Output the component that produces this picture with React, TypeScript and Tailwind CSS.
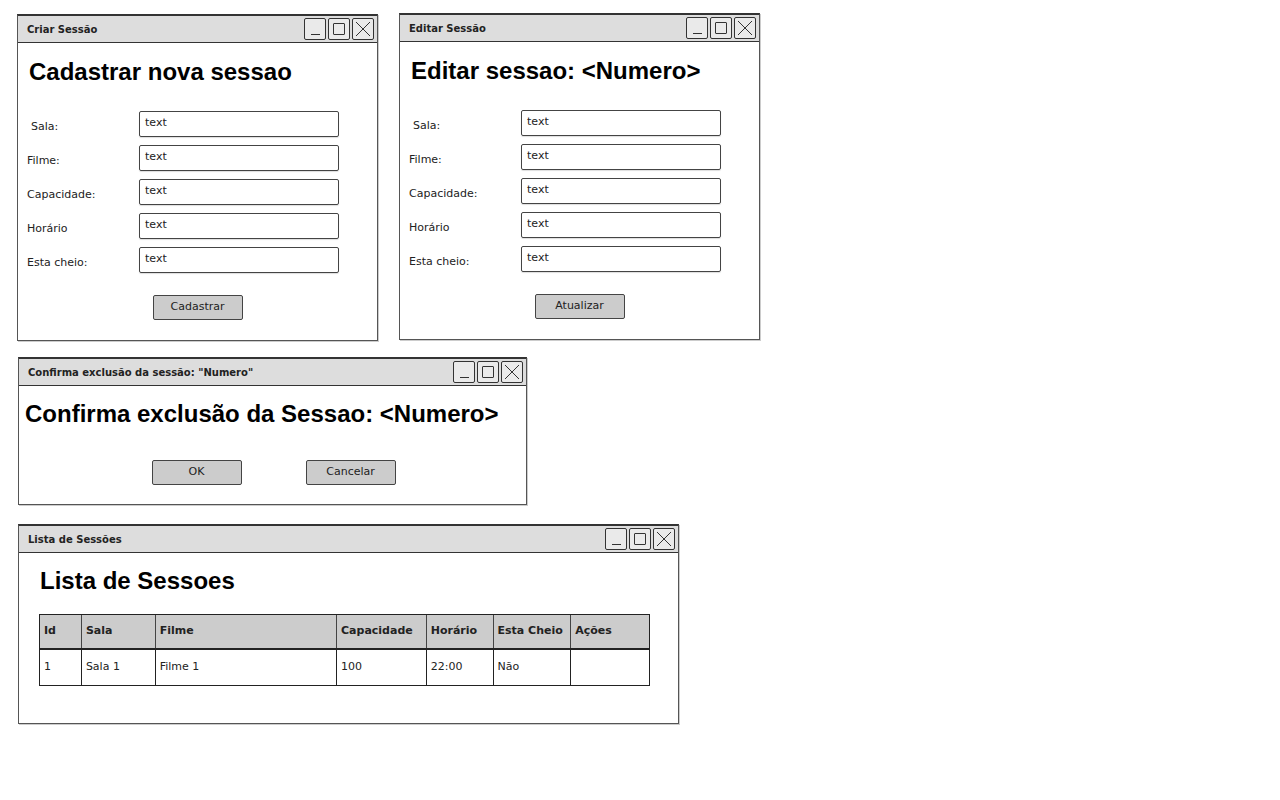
import React from 'react';

const hand = "font-['DejaVu_Sans',sans-serif]";
const head = "font-['Liberation_Sans',Arial,sans-serif]";

function TitleButtons() {
  return (
    <div className="flex gap-[2px]">
      {/* minimize */}
      <div className="w-[22px] h-[22px] border border-[#333] rounded-[2px] bg-white/40 flex items-end justify-center pb-[4px]">
        <div className="w-[9px] h-[1px] bg-[#333]" />
      </div>
      {/* maximize */}
      <div className="w-[22px] h-[22px] border border-[#333] rounded-[2px] bg-white/40 flex items-center justify-center">
        <div className="w-[12px] h-[12px] border border-[#333] rounded-[1px]" />
      </div>
      {/* close */}
      <div className="w-[22px] h-[22px] border border-[#333] rounded-[2px] bg-white/40 flex items-center justify-center">
        <svg width="16" height="16" viewBox="0 0 16 16">
          <path d="M1 1 L15 15 M15 1 L1 15" stroke="#333" strokeWidth="1" fill="none" />
        </svg>
      </div>
    </div>
  );
}

function Window({
  title,
  className,
  children,
}: {
  title: string;
  className: string;
  children: React.ReactNode;
}) {
  return (
    <div className={`bg-white border border-[#555] border-t-2 border-t-[#333] flex flex-col shadow-[1px_1px_0_#ccc] ${className}`}>
      <div className="h-[27px] bg-[#dddddd] border-b border-[#333] flex items-center justify-between pl-[9px] pr-[3px]">
        <span className={`${hand} text-[10px] font-bold text-[#222]`}>{title}</span>
        <TitleButtons />
      </div>
      {children}
    </div>
  );
}

function SketchButton({ label }: { label: string }) {
  return (
    <div className={`w-[90px] h-[25px] bg-[#cccccc] border border-[#444] rounded-[2px] flex items-center justify-center ${hand} text-[11px] text-[#222]`}>
      {label}
    </div>
  );
}

const fields = ['Sala:', 'Filme:', 'Capacidade:', 'Horário', 'Esta cheio:'];

function SessionForm({ heading, button }: { heading: string; button: string }) {
  return (
    <div className="flex flex-col flex-1">
      <h1 className={`${head} text-[24px] leading-[28px] font-bold text-black mt-[15px] ml-[11px]`}>{heading}</h1>
      <div className="flex flex-col gap-[8px] mt-[25px]">
        {fields.map((f, i) => (
          <div key={f} className="flex items-center h-[26px]">
            <span className={`${hand} text-[11px] text-[#222] w-[121px] ${i === 0 ? 'pl-[13px]' : 'pl-[9px]'} pt-[6px]`}>{f}</span>
            <div className={`w-[200px] h-[26px] border border-[#444] rounded-[2px] shadow-[0_1px_1px_#ddd] px-[5px] pt-[4px] ${hand} text-[11px] leading-[14px] text-[#222]`}>
              text
            </div>
          </div>
        ))}
      </div>
      <div className="flex justify-center mt-[22px]">
        <SketchButton label={button} />
      </div>
    </div>
  );
}

const columns = [
  { name: 'Id', w: 'w-[42px]', v: '1' },
  { name: 'Sala', w: 'w-[74px]', v: 'Sala 1' },
  { name: 'Filme', w: 'w-[182px]', v: 'Filme 1' },
  { name: 'Capacidade', w: 'w-[90px]', v: '100' },
  { name: 'Horário', w: 'w-[67px]', v: '22:00' },
  { name: 'Esta Cheio', w: 'w-[78px]', v: 'Não' },
  { name: 'Ações', w: 'w-[78px]', v: '' },
];

export default function App() {
  return (
    <div className="w-[1280px] h-[800px] bg-white pl-[17px] pt-[13px] flex flex-col items-start">
      <div className="flex items-start gap-[21px]">
        <Window title="Criar Sessão" className="w-[361px] h-[327px] mt-[1px]">
          <SessionForm heading="Cadastrar nova sessao" button="Cadastrar" />
        </Window>
        <Window title="Editar Sessão" className="w-[361px] h-[327px]">
          <SessionForm heading="Editar sessao: <Numero>" button="Atualizar" />
        </Window>
      </div>

      <Window title={'Confirma exclusão da sessão: "Numero"'} className="w-[509px] h-[148px] mt-[16px] ml-[1px]">
        <h1 className={`${head} text-[24px] leading-[28px] font-bold text-black mt-[14px] ml-[6px]`}>
          Confirma exclusão da Sessao: &lt;Numero&gt;
        </h1>
        <div className="flex justify-center gap-[64px] mt-[32px] pl-[2px]">
          <SketchButton label="OK" />
          <SketchButton label="Cancelar" />
        </div>
      </Window>

      <Window title="Lista de Sessões" className="w-[661px] h-[200px] mt-[19px] ml-[1px]">
        <h1 className={`${head} text-[24px] leading-[28px] font-bold text-black mt-[14px] ml-[21px]`}>Lista de Sessoes</h1>
        <div className="mt-[19px] ml-[20px] w-[611px] border border-[#222] flex flex-col">
          <div className="flex h-[35px] bg-[#cccccc] border-b-2 border-[#222]">
            {columns.map((c, i) => (
              <div
                key={c.name}
                className={`${c.w} ${i < columns.length - 1 ? 'border-r border-[#444]' : ''} flex items-center pl-[4px] ${hand} text-[11px] font-bold text-[#222]`}
              >
                {c.name}
              </div>
            ))}
          </div>
          <div className="flex h-[35px]">
            {columns.map((c, i) => (
              <div
                key={c.name}
                className={`${c.w} ${i < columns.length - 1 ? 'border-r border-[#222]' : ''} flex items-center pl-[4px] ${hand} text-[11px] text-[#222]`}
              >
                {c.v}
              </div>
            ))}
          </div>
        </div>
      </Window>
    </div>
  );
}
